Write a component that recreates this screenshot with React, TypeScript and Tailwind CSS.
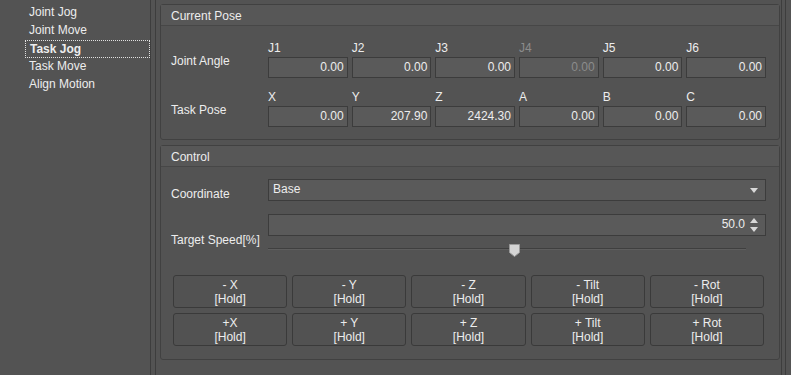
import React from 'react';

const font = { fontFamily: '"Liberation Sans", Arial, sans-serif' };

const navItems = ['Joint Jog', 'Joint Move', 'Task Jog', 'Task Move', 'Align Motion'];

const jointRow = [
  { label: 'J1', value: '0.00' },
  { label: 'J2', value: '0.00' },
  { label: 'J3', value: '0.00' },
  { label: 'J4', value: '0.00', disabled: true },
  { label: 'J5', value: '0.00' },
  { label: 'J6', value: '0.00' },
];

const taskRow = [
  { label: 'X', value: '0.00' },
  { label: 'Y', value: '207.90' },
  { label: 'Z', value: '2424.30' },
  { label: 'A', value: '0.00' },
  { label: 'B', value: '0.00' },
  { label: 'C', value: '0.00' },
];

const jogButtons = [
  '- X', '- Y', '- Z', '- Tilt', '- Rot',
  '+X', '+ Y', '+ Z', '+ Tilt', '+ Rot',
];

type Field = { label: string; value: string; disabled?: boolean };

const PoseRow: React.FC<{ title: string; fields: Field[] }> = ({ title, fields }) => (
  <div className="flex items-center">
    <div className="w-[107px] pl-[10px] pt-[4px]">{title}</div>
    <div className="grid w-[498px] grid-cols-6 gap-x-[4px]">
      {fields.map(f => (
        <div key={f.label} className="flex flex-col">
          <span className={`h-[14px] pt-[1px] leading-[14px] ${f.disabled ? 'text-[#8c8c8c]' : ''}`}>{f.label}</span>
          <div
            className={`mt-[3px] h-[21px] border border-[#3c3c3c] bg-[#5a5a5a] pr-[3px] text-right leading-[19px] ${
              f.disabled ? 'text-[#8c8c8c]' : ''
            }`}
          >
            {f.value}
          </div>
        </div>
      ))}
    </div>
  </div>
);

const GroupBox: React.FC<{ title: string; children: React.ReactNode; className?: string }> = ({ title, children, className }) => (
  <div className={`rounded-[3px] border border-[#414141] ${className ?? ''}`}>
    <div className="h-[21px] border-b border-[#474747] bg-[#575757] pl-[10px] leading-[22px]">{title}</div>
    {children}
  </div>
);

const App: React.FC = () => {
  return (
    <div style={font} className="flex h-[375px] w-[791px] overflow-hidden bg-[#535353] text-[12px] text-[#ededed]">
      {/* Menu list */}
      <div className="w-[151px] shrink-0 border-r border-[#3d3d3d] pt-[4px]">
        {navItems.map(item => (
          <div
            key={item}
            className={`ml-[25px] h-[18px] pl-[4px] leading-[17px] ${
              item === 'Task Jog' ? 'border border-dotted border-[#e0e0e0] pl-[3px] font-bold leading-[16px]' : ''
            }`}
          >
            {item}
          </div>
        ))}
      </div>

      <div className="w-[4px] shrink-0" />

      {/* Main panel */}
      <div className="w-[627px] shrink-0 border-x border-[#3d3d3d] pl-[4px] pr-[1px] pt-[4px]">
        <GroupBox title="Current Pose" className="h-[136px]">
          <div className="flex flex-col gap-[11px] pt-[14px]">
            <PoseRow title="Joint Angle" fields={jointRow} />
            <PoseRow title="Task Pose" fields={taskRow} />
          </div>
        </GroupBox>

        <GroupBox title="Control" className="mt-[5px] h-[215px]">
          <div className="pt-[12px]">
            <div className="flex">
              <div className="w-[107px] pl-[10px] pt-[8px] leading-[14px]">Coordinate</div>
              <div className="relative h-[22px] w-[498px] border border-[#3c3c3c] bg-[#5a5a5a] pl-[4px] leading-[19px]">
                Base
                <svg className="absolute right-[7px] top-[8px]" width="8" height="5" viewBox="0 0 8 5">
                  <path d="M0 0H8L4 5Z" fill="#d8d8d8" />
                </svg>
              </div>
            </div>

            <div className="mt-[13px] flex">
              <div className="flex w-[107px] items-end whitespace-nowrap pb-[11px] pl-[10px] leading-[14px]">Target Speed[%]</div>
              <div className="w-[498px]">
                <div className="relative h-[22px] border border-[#3c3c3c] bg-[#5a5a5a] pr-[20px] text-right leading-[19px]">
                  50.0
                  <svg className="absolute right-[7px] top-[3px]" width="8" height="14" viewBox="0 0 8 14">
                    <path d="M0 5L4 0L8 5Z" fill="#d8d8d8" />
                    <path d="M0 9H8L4 14Z" fill="#d8d8d8" />
                  </svg>
                </div>
                <div className="relative h-[22px]">
                  <div className="absolute left-0 right-[20px] top-[12px] h-[2px] border-t border-[#3f3f3f] bg-[#5e5e5e]" />
                  <svg className="absolute left-[241px] top-[8px]" width="11" height="13" viewBox="0 0 11 13">
                    <path d="M0.5 0.5H10.5V8.5L5.5 12.5L0.5 8.5Z" fill="#d4d4d4" stroke="#9a9a9a" />
                  </svg>
                </div>
              </div>
            </div>

            <div className="mt-[17px] grid w-[603px] grid-cols-5 gap-[5px] pl-[12px]">
              {jogButtons.map(b => (
                <div
                  key={b}
                  className="flex h-[33px] flex-col items-center justify-center rounded-[3px] border border-[#3a3a3a] bg-[#525252] leading-[14px]"
                >
                  <span>{b}</span>
                  <span>[Hold]</span>
                </div>
              ))}
            </div>
          </div>
        </GroupBox>
      </div>

      <div className="w-[3px] shrink-0" />
      <div className="w-[1px] shrink-0 bg-[#3d3d3d]" />
    </div>
  );
};

export default App;
